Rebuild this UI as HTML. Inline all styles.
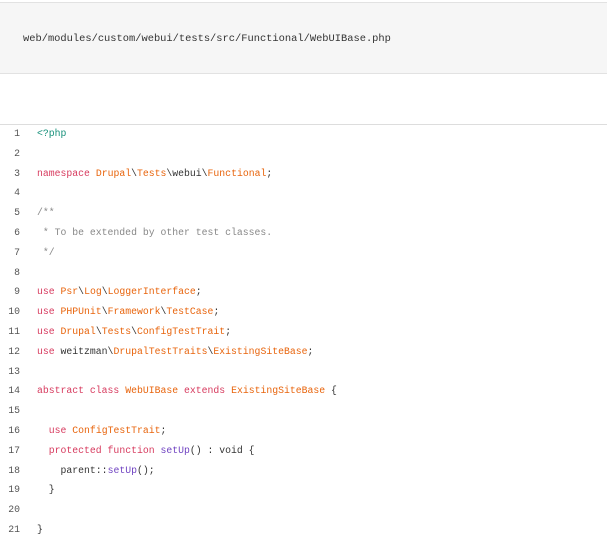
<!DOCTYPE html>
<html><head><style>
body{margin:0;background:#fff;width:607px;height:539px;overflow:hidden;position:relative;font-family:"Liberation Mono",monospace;}
.hd{position:absolute;left:0;top:2px;width:607px;height:70px;background:#f6f6f6;border-top:1px solid #e2e2e2;border-bottom:1px solid #e2e2e2;}
.hd span{position:absolute;left:23px;top:30px;font-size:10.4px;color:#333;}
.code{position:absolute;left:0;top:124px;width:607px;border-top:1px solid #ddd;}
.ln{position:absolute;left:0;width:20px;text-align:right;font-size:9.8px;color:#555;}
.l{position:absolute;left:37px;font-size:9.8px;color:#333;white-space:pre;}
.k{color:#d73a5e}.c{color:#e8640c}.g{color:#888}.t{color:#16907a}.f{color:#6f42c1}
</style></head><body>
<div class="hd"><span>web/modules/custom/webui/tests/src/Functional/WebUIBase.php</span></div>
<div class="code"></div>
<div id="w"></div>
<script>
var L=[
'<span class="t">&lt;?php</span>','',
'<span class="k">namespace</span> <span class="c">Drupal</span>\\<span class="c">Tests</span>\\webui\\<span class="c">Functional</span>;','',
'<span class="g">/**</span>','<span class="g"> * To be extended by other test classes.</span>','<span class="g"> */</span>','',
'<span class="k">use</span> <span class="c">Psr</span>\\<span class="c">Log</span>\\<span class="c">LoggerInterface</span>;',
'<span class="k">use</span> <span class="c">PHPUnit</span>\\<span class="c">Framework</span>\\<span class="c">TestCase</span>;',
'<span class="k">use</span> <span class="c">Drupal</span>\\<span class="c">Tests</span>\\<span class="c">ConfigTestTrait</span>;',
'<span class="k">use</span> weitzman\\<span class="c">DrupalTestTraits</span>\\<span class="c">ExistingSiteBase</span>;','',
'<span class="k">abstract class</span> <span class="c">WebUIBase</span> <span class="k">extends</span> <span class="c">ExistingSiteBase</span> {','',
'  <span class="k">use</span> <span class="c">ConfigTestTrait</span>;',
'  <span class="k">protected function</span> <span class="f">setUp</span>() : void {',
'    parent::<span class="f">setUp</span>();','  }','','}'];
var h='';for(var i=0;i<L.length;i++){var y=128+i*19.8;h+='<div class="ln" style="top:'+y+'px">'+(i+1)+'</div><div class="l" style="top:'+y+'px">'+L[i]+'</div>';}
document.getElementById('w').innerHTML=h;
</script>
</body></html>
